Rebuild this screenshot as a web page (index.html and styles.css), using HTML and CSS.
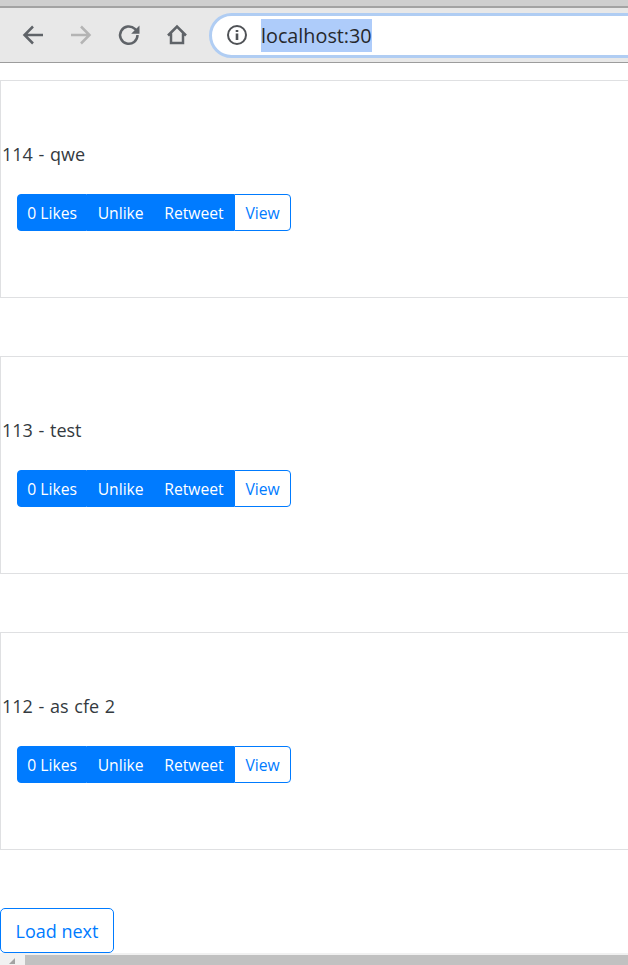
FILE: index.html
```html
<!DOCTYPE html>
<html lang="en">
<head>
  <meta charset="UTF-8" />
  <title>localhost:30</title>
  <link rel="stylesheet" href="styles.css">
</head>
<body>

  <div class="tab-strip"></div>

  <div class="toolbar">
    <svg class="nav-icon" viewBox="0 0 24 24"><path d="M22 12H4M12 3.500 3.500 12l8.500 8.500" /></svg>
    <svg class="nav-icon off" viewBox="0 0 24 24"><path d="M2 12h18M12 3.500l8.500 8.500-8.500 8.500" /></svg>
    <svg class="nav-icon" viewBox="0 0 24 24"><path d="M20.500 12a8.700 8.700 0 1 1-2.600-6.100L20 8" /><path class="fill" d="M22.500 2.500v8.300h-8.300z" /></svg>
    <svg class="nav-icon" viewBox="0 0 24 24"><path d="M3 12.500 12 3.500l9 9M6 10.500v9.500h12v-9.500" /></svg>
    <div class="omnibox">
      <svg class="info-icon" viewBox="0 0 20 20">
        <circle cx="10" cy="10" r="9" />
        <path class="info-mark" d="M10 8.500v6.500M10 5v2" />
      </svg>
      <span class="url">localhost:30</span>
    </div>
  </div>

  <div class="tweets">
    <div class="card">
      <p class="tweet-text">114 - qwe</p>
      <div class="btn-group">
        <a class="btn primary">0 Likes</a>
        <a class="btn primary">Unlike</a>
        <a class="btn primary">Retweet</a>
        <a class="btn outline">View</a>
      </div>
    </div>

    <div class="card">
      <p class="tweet-text">113 - test</p>
      <div class="btn-group">
        <a class="btn primary">0 Likes</a>
        <a class="btn primary">Unlike</a>
        <a class="btn primary">Retweet</a>
        <a class="btn outline">View</a>
      </div>
    </div>

    <div class="card">
      <p class="tweet-text">112 - as cfe 2</p>
      <div class="btn-group">
        <a class="btn primary">0 Likes</a>
        <a class="btn primary">Unlike</a>
        <a class="btn primary">Retweet</a>
        <a class="btn outline">View</a>
      </div>
    </div>

    <button class="load-next">Load next</button>
  </div>

  <div class="hscroll">
    <div class="hscroll-arrow"></div>
    <div class="hscroll-thumb"></div>
  </div>

</body>
</html>
```

FILE: styles.css
```css
html, body {
  height: 100%;
}
body {
  margin: 0;
  font-family: "Open Sans", "Noto Sans", sans-serif;
  color: #343a40;
  background: #fff;
  display: flex;
  flex-direction: column;
  overflow: hidden;
}
.tab-strip {
  height: 6px;
  background: #cfcfcf;
  border-bottom: 2px solid #a3a3a3;
  flex: none;
}
.toolbar {
  height: 54px;
  flex: none;
  background: #e8e8e8;
  border-bottom: 1px solid #9c9c9c;
  display: flex;
  align-items: center;
  padding-left: 21px;
  gap: 24px;
  overflow: hidden;
}
.nav-icon {
  width: 24px;
  height: 24px;
  flex: none;
  fill: none;
  stroke: #5f6368;
  stroke-width: 2.500;
}
.nav-icon.off {
  stroke: #b4b4b4;
}
.nav-icon .fill {
  fill: #5f6368;
  stroke: none;
}
.omnibox {
  flex: none;
  width: 600px;
  height: 39px;
  margin-left: -4px;
  background: #fff;
  border: 3px solid #b0cdf3;
  border-radius: 24px;
  display: flex;
  align-items: center;
  padding-left: 15px;
  gap: 14px;
}
.info-icon {
  width: 20px;
  height: 20px;
  fill: none;
  stroke: #4f5256;
  stroke-width: 2;
}
.info-mark {
  stroke-width: 2.600;
}
.url {
  font-size: 19.800px;
  line-height: 33px;
  color: #26282c;
  background: #aeccfa;
}
.tweets {
  flex: 1;
  padding-top: 17px;
  display: flex;
  flex-direction: column;
  align-items: flex-start;
  gap: 58px;
}
.card {
  box-sizing: border-box;
  width: 640px;
  height: 218px;
  border: 1px solid #dfe0e2;
  padding-top: 61px;
}
.tweet-text {
  margin: 0 0 28px;
  padding-left: 1px;
  font-size: 18px;
  word-spacing: 1px;
  line-height: 24px;
}
.btn-group {
  display: inline-flex;
  margin-left: 16px;
  height: 37px;
}
.btn {
  box-sizing: border-box;
  font-size: 15.700px;
  line-height: 36px;
  padding: 0 9.300px;
  border: 1px solid #007bff;
}
.btn.primary {
  background: #007bff;
  color: #fff;
}
.btn.outline {
  padding: 0 10.400px;
  background: #fff;
  color: #007bff;
  border-radius: 0 4px 4px 0;
}
.btn:first-child {
  border-radius: 4px 0 0 4px;
}
.load-next {
  width: 114px;
  height: 45px;
  padding: 0;
  font-family: inherit;
  font-size: 18px;
  color: #007bff;
  background: #fff;
  border: 1px solid #007bff;
  border-radius: 5px;
}
.hscroll {
  height: 10px;
  flex: none;
  display: flex;
  background: #f1f1f1;
  padding-top: 2px;
}
.hscroll-arrow {
  width: 25px;
  flex: none;
  position: relative;
}
.hscroll-arrow::after {
  content: "";
  position: absolute;
  left: 9px;
  top: 3px;
  border-style: solid;
  border-width: 0 0 6px 6px;
  border-color: transparent transparent #a3a3a3 transparent;
}
.hscroll-thumb {
  flex: 1;
  background: #c1c1c1;
}
```
